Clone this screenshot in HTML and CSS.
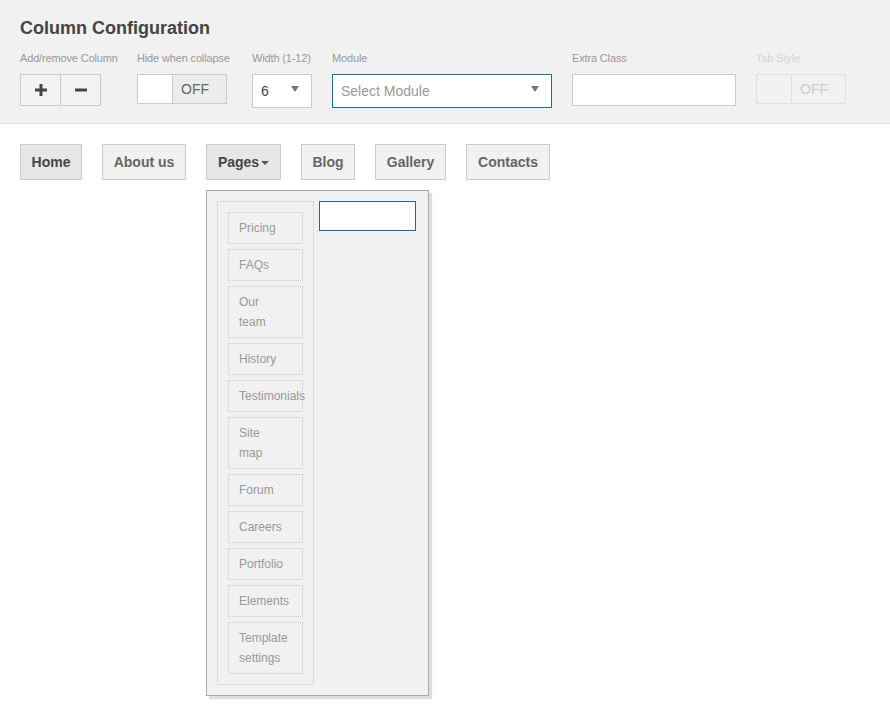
FILE: index.html
```html
<!DOCTYPE html>
<html>
<head>
<meta charset="utf-8">
<link rel="stylesheet" href="styles.css">
</head>
<body>
<header class="config">
  <h1 class="config-title">Column Configuration</h1>
  <div class="fields">
    <div class="field f-add">
      <label class="field-label">Add/remove Column</label>
      <div class="btn-group">
        <button class="icon-btn"><svg width="12" height="12" viewBox="0 0 12 12"><path d="M6 0v12M0 6h12" stroke="#444" stroke-width="3"/></svg></button>
        <button class="icon-btn"><svg width="12" height="12" viewBox="0 0 12 12"><path d="M0 6h12" stroke="#444" stroke-width="3"/></svg></button>
      </div>
    </div>
    <div class="field f-hide">
      <label class="field-label">Hide when collapse</label>
      <div class="toggle"><span class="toggle-knob"></span><span class="toggle-off">OFF</span></div>
    </div>
    <div class="field f-width">
      <label class="field-label">Width (1-12)</label>
      <div class="select"><span class="select-value">6</span><span class="arrow"></span></div>
    </div>
    <div class="field f-module">
      <label class="field-label">Module</label>
      <div class="select select-focus"><span class="select-placeholder">Select Module</span><span class="arrow"></span></div>
    </div>
    <div class="field f-extra">
      <label class="field-label">Extra Class</label>
      <div class="text-input"></div>
    </div>
    <div class="field f-tab disabled">
      <label class="field-label">Tab Style</label>
      <div class="toggle"><span class="toggle-knob"></span><span class="toggle-off">OFF</span></div>
    </div>
  </div>
</header>

<nav class="menu">
  <a class="menu-item m-home active">Home</a>
  <a class="menu-item m-about">About us</a>
  <div class="menu-dd">
    <a class="menu-item m-pages active">Pages<span class="caret"></span></a>
    <div class="dropdown">
      <ul class="sub-col">
        <li class="sub-item">Pricing</li>
        <li class="sub-item">FAQs</li>
        <li class="sub-item">Our<br>team</li>
        <li class="sub-item">History</li>
        <li class="sub-item">Testimonials</li>
        <li class="sub-item">Site<br>map</li>
        <li class="sub-item">Forum</li>
        <li class="sub-item">Careers</li>
        <li class="sub-item">Portfolio</li>
        <li class="sub-item">Elements</li>
        <li class="sub-item">Template<br>settings</li>
      </ul>
      <div class="sub-input"></div>
    </div>
  </div>
  <a class="menu-item m-blog">Blog</a>
  <a class="menu-item m-gallery">Gallery</a>
  <a class="menu-item m-contacts">Contacts</a>
</nav>
</body>
</html>
```

FILE: styles.css
```css
* { box-sizing: border-box; }
html, body { margin: 0; padding: 0; background: #fff; }
body {
  font-family: "Liberation Sans", Arial, sans-serif;
  color: #444;
  width: 890px;
  height: 726px;
  overflow: hidden;
}

.config {
  background: #f1f1f1;
  border-bottom: 1px solid #e0e0e0;
  padding: 17px 20px 16px;
  height: 124px;
}
.config-title {
  margin: 0;
  font-size: 18px;
  line-height: 22px;
  font-weight: bold;
  color: #444;
}
.fields {
  display: flex;
  gap: 20px;
  margin-top: 12px;
}
.field { display: flex; flex-direction: column; }
.field-label {
  font-size: 11px;
  line-height: 14px;
  color: #999;
  height: 23px;
  white-space: nowrap;
  letter-spacing: -0.15px;
}
.f-add { width: 97px; }
.f-hide { width: 95px; }
.f-width { width: 60px; }
.f-module { width: 220px; }
.f-extra { width: 164px; }
.f-tab { width: 90px; }

.btn-group { display: flex; width: 81px; height: 32px; }
.icon-btn {
  width: 41px;
  height: 32px;
  border: 1px solid #ccc;
  background: #f2f2f2;
  display: flex;
  align-items: center;
  justify-content: center;
  padding: 0;
}
.icon-btn + .icon-btn { margin-left: -1px; }

.toggle {
  display: flex;
  width: 90px;
  height: 30px;
  border: 1px solid #ccc;
}
.toggle-knob { width: 35px; background: #fff; border-right: 1px solid #ccc; }
.toggle-off {
  flex: 1;
  background: #ececec;
  font-size: 14px;
  line-height: 28px;
  color: #666;
  padding-left: 8px;
}
.disabled .field-label { color: #d6d6d6; }
.disabled .toggle { border-color: #e0e0e0; }
.disabled .toggle-knob { background: #f1f1f1; border-right-color: #e0e0e0; }
.disabled .toggle-off { background: #f1f1f1; color: #ccc; }

.select {
  position: relative;
  height: 34px;
  background: #fff;
  border: 1px solid #ccc;
  display: flex;
  align-items: center;
  padding-left: 8px;
  font-size: 14px;
}
.select-value { color: #444; }
.select-focus { border-color: #1f6a93; }
.select-placeholder { color: #999; }
.arrow {
  position: absolute;
  right: 12px;
  top: 11px;
  width: 0; height: 0;
  border-left: 4px solid transparent;
  border-right: 4px solid transparent;
  border-top: 6px solid #777;
}
.text-input {
  height: 32px;
  background: #fff;
  border: 1px solid #ccc;
}

.menu {
  display: flex;
  gap: 20px;
  padding: 20px 20px 0;
  align-items: flex-start;
}
.menu-item {
  display: flex;
  align-items: center;
  justify-content: center;
  height: 36px;
  padding: 0;
  border: 1px solid #ccc;
  background: #f1f1f1;
  font-size: 14px;
  font-weight: bold;
  color: #666;
  white-space: nowrap;
}
.m-home { width: 62px; }
.m-about { width: 84px; }
.m-pages { width: 75px; }
.m-blog { width: 54px; }
.m-gallery { width: 71px; }
.m-contacts { width: 84px; }
.menu-item.active { background: #e6e6e6; color: #444; }
.caret {
  display: inline-block;
  margin-left: 2px;
  margin-top: 2px;
  width: 0; height: 0;
  border-left: 4px solid transparent;
  border-right: 4px solid transparent;
  border-top: 4px solid #555;
}
.menu-dd { position: relative; }
.dropdown {
  position: absolute;
  top: 46px;
  left: 0;
  width: 223px;
  background: #f1f1f1;
  border: 1px solid #aaa;
  box-shadow: 3px 3px 1px #dedede;
  padding: 10px;
  display: flex;
  gap: 5px;
  align-items: flex-start;
}
.sub-col {
  list-style: none;
  margin: 0;
  width: 97px;
  padding: 10px;
  border: 1px dotted #c8c8c8;
  display: flex;
  flex-direction: column;
  gap: 5px;
}
.sub-item {
  width: 75px;
  padding: 5px 10px;
  border: 1px dotted #c8c8c8;
  font-size: 12px;
  line-height: 20px;
  color: #999;
  white-space: nowrap;
}
.sub-input {
  width: 97px;
  height: 30px;
  background: #fff;
  border: 1px solid #1f6a93;
}
```
